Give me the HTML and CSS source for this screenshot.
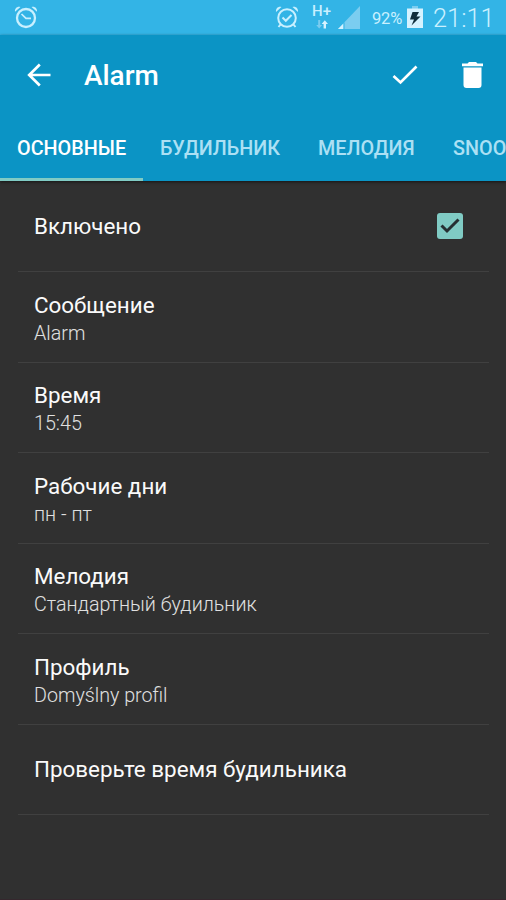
FILE: index.html
```html
<!DOCTYPE html>
<html lang="ru">
<head>
<meta charset="utf-8">
<title>Alarm</title>
<link rel="stylesheet" href="styles.css">
</head>
<body>
<div class="status">
  <svg class="clock" viewBox="0 0 24 24"><circle cx="12" cy="13" r="9" fill="none" stroke="currentColor" stroke-width="2.3"/><path d="M7.5 9 12 13.3H17" fill="none" stroke="currentColor" stroke-width="1.7"/><path d="M1 6.8C0.5 3.5 3.2 1 6.5 2ZM23 6.8C23.5 3.5 20.8 1 17.5 2Z" fill="currentColor"/></svg>
  <div class="status-right">
    <svg class="clock" viewBox="0 0 24 24"><circle cx="12" cy="13" r="8.8" fill="none" stroke="currentColor" stroke-width="2"/><path d="M7.5 12.5 10.8 15.8 16.5 10M5.5 19.5 3.5 22M18.5 19.5 20.5 22" fill="none" stroke="currentColor" stroke-width="2"/><path d="M1 7C0.5 3.5 3.2 1 6.5 2ZM23 7C23.5 3.5 20.8 1 17.5 2Z" fill="currentColor"/></svg>
    <div class="network">
      <span>H+</span>
      <svg viewBox="0 0 12 9"><path d="M2.2 0H4.2V5H6.2L3.2 8.5 0.2 5H2.2Z" fill="#7accf0"/><path d="M7.6 8.5H10V4H12L8.8 0.2 5.6 4H7.6Z" fill="#d5f2ff"/></svg>
    </div>
    <svg class="signal" viewBox="0 0 22 23"><path d="M22 0V23H0Z" fill="#7bcdf0"/><path d="M5.5 17.5V23H0Z" fill="#d5f2ff"/><path d="M6 16.500V23" stroke="#33b4e6"/></svg>
    <span class="percent">92%</span>
    <svg class="battery" viewBox="0 0 16 22"><path d="M5 0H11V3H5Z" fill="#7bcdf0"/><path d="M0 2.5H16V22H0Z" fill="#d5f2ff"/><path d="M5.5 6H12L9.500 10.5H13.5L4.5 19.5 7 13.500H3Z" fill="#102e3c"/></svg>
    <span class="time">21:11</span>
  </div>
</div>
<header class="header">
  <div class="toolbar">
    <svg class="back" viewBox="0 0 24 24"><path d="M12.8 1.5 2.2 12 12.8 22.5M2.2 12H23.5" fill="none" stroke="#fff" stroke-width="2.7"/></svg>
    <h1>Alarm</h1>
    <svg class="done" viewBox="0 0 26 20"><path d="M1.5 11 8.5 17.5 24.5 1.5" fill="none" stroke="#fff" stroke-width="2.7"/></svg>
    <svg class="trash" viewBox="0 0 21 26"><path d="M0 1.5H5.5L7 0H14L15.5 1.5H21V4.3H0ZM1.5 5.5H19.5V23Q19.5 26 16.5 26H4.5Q1.5 26 1.5 23Z" fill="#fff"/></svg>
  </div>
  <nav class="tabs">
    <span class="tab active">ОСНОВНЫЕ</span>
    <span class="tab alarm">БУДИЛЬНИК</span>
    <span class="tab melody">МЕЛОДИЯ</span>
    <span class="tab">SNOO</span>
  </nav>
</header>
<main class="list">
  <div class="row"><span class="title">Включено</span><svg class="checkbox" viewBox="0 0 26 26"><rect width="26" height="26" rx="3" fill="#80cbc4"/><path d="M4.5 12.5 10 18 21.5 6.5" fill="none" stroke="#263033" stroke-width="3"/></svg></div>
  <div class="row detail"><div><div class="title">Сообщение</div><div class="sub">Alarm</div></div></div>
  <div class="row detail"><div><div class="title">Время</div><div class="sub">15:45</div></div></div>
  <div class="row detail"><div><div class="title">Рабочие дни</div><div class="sub">пн - пт</div></div></div>
  <div class="row detail"><div><div class="title">Мелодия</div><div class="sub">Стандартный будильник</div></div></div>
  <div class="row detail"><div><div class="title">Профиль</div><div class="sub">Domyślny profil</div></div></div>
  <div class="row"><span class="title">Проверьте время будильника</span></div>
</main>
</body>
</html>
```
FILE: styles.css
```css
* { box-sizing: border-box; }
body {
  margin: 0;
  height: 900px;
  display: flex;
  flex-direction: column;
  overflow: hidden;
  color: #fff;
  background: #303030;
  border-bottom: 1px solid #35272d;
  font-family: Roboto, sans-serif;
}
svg { display: block; flex: none; }
.status {
  height: 35px;
  flex: none;
  padding: 0 13px 0 14px;
  display: flex;
  align-items: center;
  justify-content: space-between;
  background: #33b4e6;
  color: #c9f0ff;
}
.clock { width: 24px; height: 24px; margin-bottom: 1px; }
.status-right { display: flex; align-items: center; height: 35px; }
.network { width: 19px; height: 26px; margin: 0 0 1px 13px; display: flex; flex-direction: column; align-items: center; font-size: 15px; font-weight: 500; line-height: 15px; }
.network svg { width: 12px; height: 9px; margin-top: 1px; }
.signal { width: 22px; height: 23px; margin-left: 7px; }
.percent { width: 35px; margin: 2px 0 0 12px; font-size: 16.5px; letter-spacing: -0.2px; white-space: nowrap; }
.battery { width: 16px; height: 22px; margin-top: -1px; }
.time { width: 60px; margin: 1px 0 0 10px; font-size: 25.4px; font-weight: 300; white-space: nowrap; }
.header {
  height: 146px;
  flex: none;
  background: #0b94c5;
  box-shadow: 0 1px 3px rgba(0, 0, 0, .6);
}
.toolbar { height: 80px; padding: 0 23px 0 27px; display: flex; align-items: center; }
.back { width: 24px; height: 24px; margin-bottom: 1px; }
h1 { flex: 1; margin: 2px 0 0 33px; font-size: 27.9px; line-height: 32px; font-weight: 500; }
.done { width: 26px; height: 20px; margin-right: 44px; }
.trash { width: 21px; height: 26px; }
.tabs { height: 66px; display: flex; overflow: hidden; }
.tab {
  flex: none;
  padding: 1px 17px 0;
  line-height: 66px;
  font-size: 19.8px;
  font-weight: 500;
  color: #ace0f4;
  white-space: nowrap;
}
.active { width: 143px; color: #fff; border-bottom: 3px solid #80cbc4; }
.alarm { width: 158px; }
.melody { width: 135px; }
.list { padding: 0.5px 17px 0 18px; }
.row {
  height: 90.5px;
  padding: 0 26px 0 16px;
  display: flex;
  align-items: center;
  justify-content: space-between;
  border-bottom: 1px solid #404040;
}
.detail { padding-top: 4px; }
.title { font-size: 22.4px; line-height: 30px; color: #fafafa; }
.sub { font-size: 19.7px; line-height: 28px; font-weight: 300; color: #e0e0e0; }
.checkbox { width: 26px; height: 26px; margin-bottom: 1px; }
```
